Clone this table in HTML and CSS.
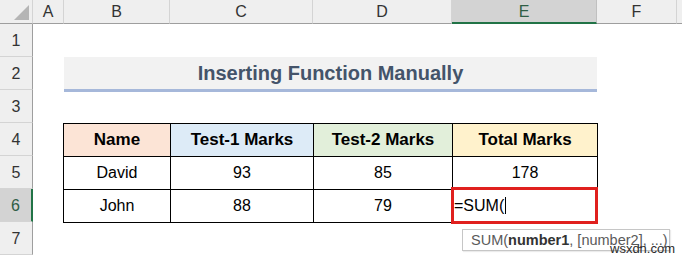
FILE: index.html
```html
<!DOCTYPE html>
<html>
<head>
<meta charset="utf-8">
<link rel="stylesheet" href="styles.css">
</head>
<body>
<div class="sheet">
  <div class="corner"><span class="tri"></span></div>
  <div class="ch">A</div>
  <div class="ch">B</div>
  <div class="ch">C</div>
  <div class="ch">D</div>
  <div class="ch sel">E</div>
  <div class="ch">F</div>
  <div class="ch last"></div>

  <div class="rh r1">1</div>
  <div class="rh r2">2</div>
  <div class="rh r3">3</div>
  <div class="rh r4">4</div>
  <div class="rh r5">5</div>
  <div class="rh r6 sel">6</div>
  <div class="rh r7">7</div>

  <div class="title">Inserting Function Manually</div>

  <table class="data">
    <tr class="head">
      <th class="c-name">Name</th>
      <th class="c-t1">Test-1 Marks</th>
      <th class="c-t2">Test-2 Marks</th>
      <th class="c-tot">Total Marks</th>
    </tr>
    <tr>
      <td>David</td><td>93</td><td>85</td><td>178</td>
    </tr>
    <tr>
      <td>John</td><td>88</td><td>79</td><td class="edit">=SUM(<span class="caret"></span></td>
    </tr>
  </table>

  <div class="redbox"></div>
  <div class="tip">SUM(<b>number1</b>, [number2], ...)</div>
  <div class="mark">wsxdn.com</div>
</div>
</body>
</html>
```

FILE: styles.css
```css
* { box-sizing: border-box; }
html, body { margin: 0; padding: 0; background: #fff; }
body { font-family: "Liberation Sans", Arial, sans-serif; color: #000; }

.sheet {
  position: relative;
  width: 682px;
  height: 257px;
  overflow: hidden;
  display: grid;
  grid-template-columns: 33px 31px 106px 143px 139px 145px 80px 5px;
  grid-template-rows: 24px repeat(7, 33px);
}

.corner {
  grid-column: 1; grid-row: 1;
  background: #efefef;
  border-right: 1px solid #d4d4d4;
  border-bottom: 1px solid #9e9e9e;
  position: relative;
}
.tri {
  position: absolute;
  right: 3px; bottom: 3px;
  width: 0; height: 0;
  border-left: 15px solid transparent;
  border-bottom: 15px solid #b5b5b5;
}

.ch {
  grid-row: 1;
  background: #efefef;
  border-right: 1px solid #d4d4d4;
  border-bottom: 1px solid #9e9e9e;
  font-size: 16px;
  color: #333;
  display: flex; align-items: center; justify-content: center;
  padding-top: 1px;
}
.ch.sel {
  background: #d3d3d3;
  color: #2f5e45;
  border-bottom: 2px solid #217346;
  border-right-color: #c0c0c0;
}
.ch.last { border-right: none; }

.rh {
  grid-column: 1;
  background: #efefef;
  border-right: 1px solid #9e9e9e;
  border-bottom: 1px solid #d4d4d4;
  font-size: 16px;
  color: #333;
  display: flex; align-items: center; justify-content: center;
  padding-top: 2px;
}
.r1 { grid-row: 2; }
.r2 { grid-row: 3; }
.r3 { grid-row: 4; }
.r4 { grid-row: 5; }
.r5 { grid-row: 6; }
.r6 { grid-row: 7; }
.r7 { grid-row: 8; }
.rh.sel {
  background: #d3d3d3;
  color: #2f5e45;
  border-right: 2px solid #217346;
}

.title {
  grid-column: 3 / 7;
  grid-row: 3;
  align-self: start;
  height: 35px;
  background: #f2f2f2;
  border-bottom: 3px solid #a6b8da;
  color: #44546a;
  font-weight: bold;
  font-size: 20px;
  display: flex; align-items: center; justify-content: center;
  padding-top: 1px;
}

.data {
  grid-column: 3 / 7;
  grid-row: 5 / 8;
  align-self: start;
  border-collapse: collapse;
  table-layout: fixed;
  width: 534px;
  margin-left: -1px;
}
.data th, .data td {
  border: 1px solid #000;
  height: 33px;
  padding: 0;
  text-align: center;
  vertical-align: middle;
  font-size: 16px;
}
.data th { font-weight: bold; font-size: 17px; }
.data .c-name { width: 107px; background: #fce4d6; }
.data .c-t1 { width: 143px; background: #ddebf7; }
.data .c-t2 { width: 139px; background: #e2efda; }
.data .c-tot { width: 145px; background: #fff2cc; }
.data td.edit { text-align: left; padding-left: 1px; }
.caret {
  display: inline-block;
  width: 1px; height: 17px;
  background: #000;
  vertical-align: -3px;
  margin-left: 1px;
}

.redbox {
  position: absolute;
  left: 451px; top: 187px;
  width: 147px; height: 37px;
  border: 3px solid #e0201e;
}

.tip {
  position: absolute;
  left: 462px; top: 229px;
  width: 208px; height: 22px;
  background: #fff;
  border: 1px solid #c6c6c6;
  box-shadow: 1px 1px 1px rgba(0,0,0,0.08);
  font-size: 14.5px;
  color: #5a5a5a;
  padding: 3px 0 0 8px;
  line-height: 14px;
  white-space: nowrap;
}
.tip b { color: #333; }

.mark {
  position: absolute;
  left: 610px; top: 242px;
  font-size: 13px;
  color: #2b2b2b;
  line-height: 13px;
}
```
